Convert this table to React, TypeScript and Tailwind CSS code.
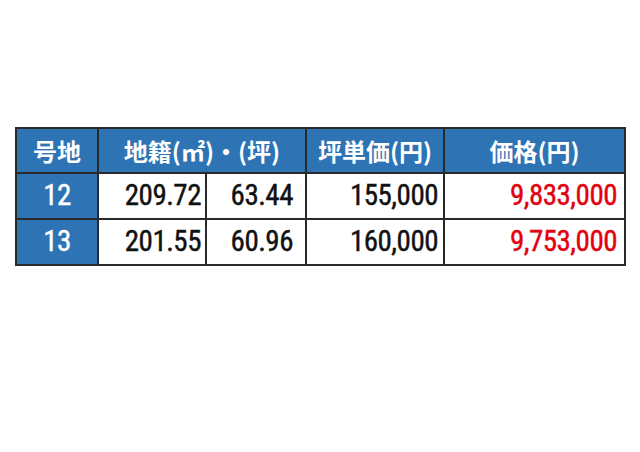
import React from "react";

const num = "[font-family:Roboto,sans-serif] [font-stretch:condensed] font-normal tracking-[-0.5px] [-webkit-text-stroke:0.4px_currentColor]";
const head = "bg-[#2e74b5] text-white border-2 border-[#2a2a2a] p-0 text-[24px] font-bold [font-family:'Noto_Sans_CJK_JP',sans-serif] text-center";

export default function App() {
  const rows = [
    { id: "12", a: "209.72", b: "63.44", c: "155,000", d: "9,833,000" },
    { id: "13", a: "201.55", b: "60.96", c: "160,000", d: "9,753,000" },
  ];
  return (
    <div className="w-[640px] h-[452px] bg-white overflow-hidden">
      <table className="mt-[127px] ml-[15px] table-fixed border-collapse w-[609px] border-2 border-[#2a2a2a]">
        <colgroup>
          <col className="w-[82px]" />
          <col className="w-[108px]" />
          <col className="w-[100px]" />
          <col className="w-[138px]" />
          <col className="w-[181px]" />
        </colgroup>
        <thead>
          <tr className="h-[45px]">
            <th className={head}>号地</th>
            <th colSpan={2} className={head}>地籍(㎡)・(坪)</th>
            <th className={head}>坪単価(円)</th>
            <th className={head}>価格(円)</th>
          </tr>
        </thead>
        <tbody>
          {rows.map((r) => (
            <tr key={r.id} className="h-[46px]">
              <td className={`bg-[#2e74b5] text-white border-2 border-[#2a2a2a] p-0 text-center text-[29px] ${num}`}>{r.id}</td>
              <td className={`border-2 border-[#2a2a2a] p-0 pr-[4px] text-right text-[29px] text-[#111] ${num}`}>{r.a}</td>
              <td className={`border-2 border-[#2a2a2a] p-0 pr-[12px] text-right text-[29px] text-[#111] ${num}`}>{r.b}</td>
              <td className={`border-2 border-[#2a2a2a] p-0 pr-[5px] text-right text-[29px] text-[#111] ${num}`}>{r.c}</td>
              <td className={`border-2 border-[#2a2a2a] p-0 pr-[7px] text-right text-[29px] text-[#e3000f] ${num}`}>{r.d}</td>
            </tr>
          ))}
        </tbody>
      </table>
    </div>
  );
}
